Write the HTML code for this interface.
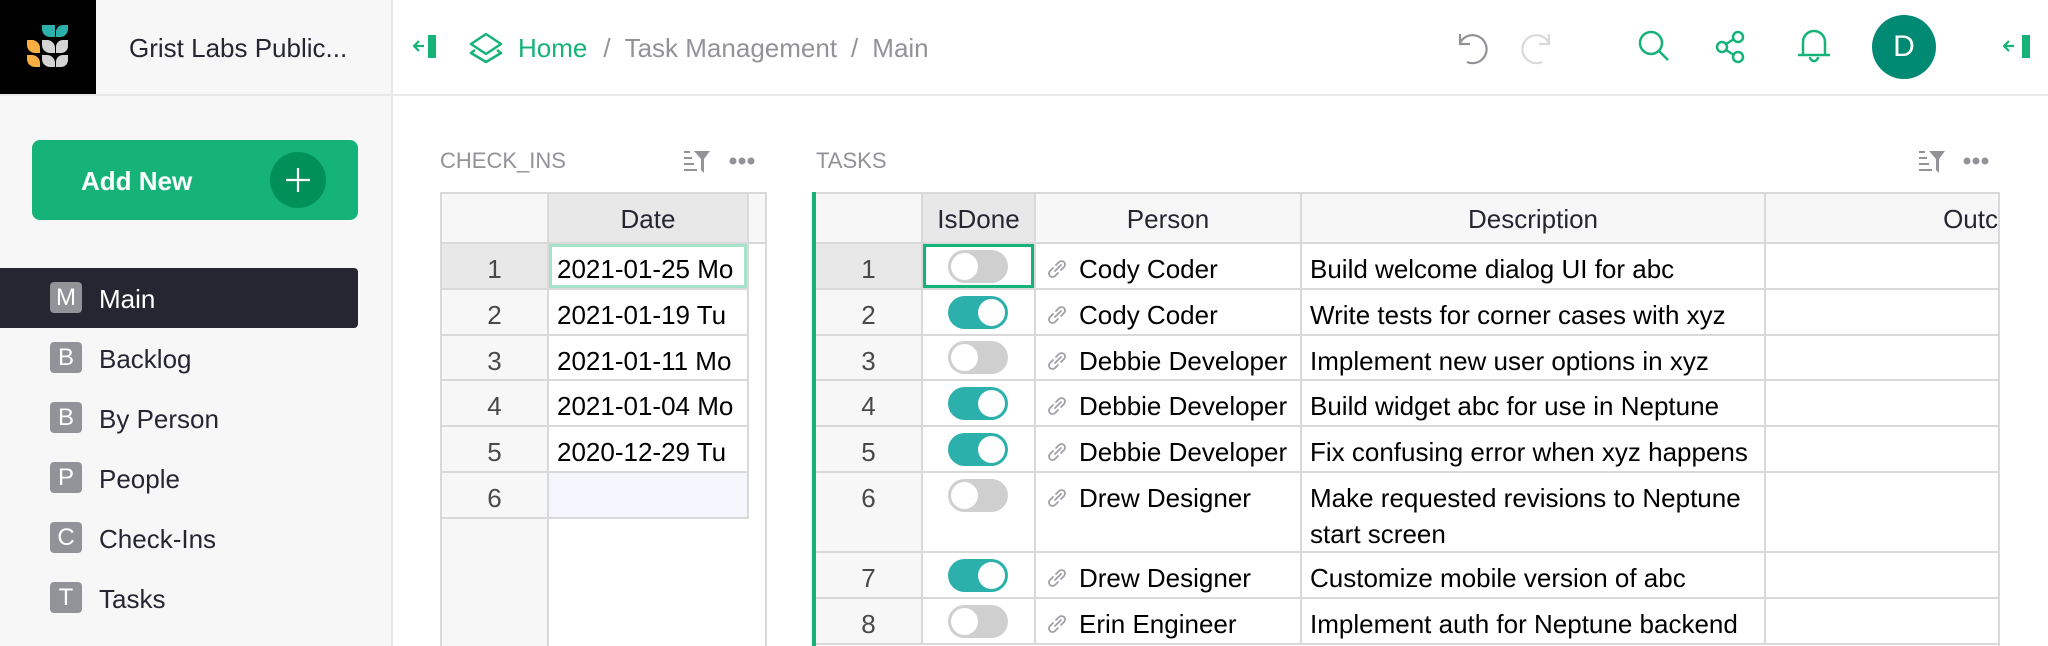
<!DOCTYPE html>
<html><head><meta charset="utf-8">
<style>
*{box-sizing:border-box;margin:0;padding:0}
body{width:2048px;height:646px;overflow:hidden;background:#fff;font-family:"Liberation Sans",Arial,sans-serif;font-size:26px;color:#262633;position:relative}
.a{position:absolute}
.cell{position:absolute;border-right:2px solid #d9d9d9;border-bottom:2px solid #d9d9d9;white-space:nowrap;overflow:hidden}
.hd{background:#f7f7f7;text-align:center;line-height:50px;color:#262633}
.rn{background:#f7f7f7;text-align:center;color:#494949;padding-top:7px;line-height:36px}
.tx{padding:7px 0 0 8px;line-height:36px;color:#000}
.nav{position:absolute;left:0;width:358px;height:60px}
.badge{position:absolute;left:50px;top:14px;width:32px;height:31px;border-radius:4px;background:#929299;color:#fff;text-align:center;line-height:31px;font-size:24px}
.nl{position:absolute;left:99px;top:1px;line-height:60px;color:#262633}
.tg{position:absolute;width:60px;height:33px;border-radius:17px}
.tg i{position:absolute;top:3px;width:27px;height:27px;border-radius:50%;background:#fff}
.off{background:#cfcfcf}.off i{left:3px}
.on{background:#2cb0ab}.on i{left:30px}
.lk{position:absolute;left:10px;top:14px}
.pn{position:absolute;left:43px;top:7px}
</style></head><body>
<div class="a" style="left:0;top:0;width:392px;height:95px;background:#f7f7f7"></div>
<div class="a" style="left:0;top:0;width:96px;height:95px;background:#000"></div>
<svg class="a" style="left:0;top:0" width="96" height="95">
<g fill="#2cb0ab"><path d="M42 25h13v12h-5a8 8 0 0 1-8-8z"/><path d="M56 37h5a8 8 0 0 0 7-8v-4h-5a7 7 0 0 0-7 7z"/></g>
<g fill="#f9ae41"><path d="M27 40h5a8 8 0 0 1 8 8v5h-5a8 8 0 0 1-8-8z"/><path d="M27 55h5a8 8 0 0 1 8 8v4h-5a8 8 0 0 1-8-8z"/></g>
<g fill="#d4d4d4"><path d="M42 40h5a8 8 0 0 1 8 8v5h-5a8 8 0 0 1-8-8z"/><path d="M56 53h5a7 7 0 0 0 7-7v-6h-5a7 7 0 0 0-7 7z"/><path d="M42 55h5a8 8 0 0 1 8 8v4h-5a8 8 0 0 1-8-8z"/><path d="M56 67h5a7 7 0 0 0 7-7v-5h-5a7 7 0 0 0-7 7z"/></g>
</svg>
<div class="a" style="left:129px;top:28px;line-height:40px;color:#262633">Grist Labs Public...</div>
<div class="a" style="left:391px;top:0;width:2px;height:646px;background:#e8e8e8"></div>
<div class="a" style="left:0;top:94px;width:2048px;height:2px;background:#e8e8e8"></div>
<svg class="a" style="left:410px;top:33px" width="30" height="28"><path d="M14 13H4M9 8l-5 5 5 5" stroke="#16b378" stroke-width="2.2" fill="none"/><rect x="18" y="2" width="8" height="23" fill="#16b378"/></svg>
<svg class="a" style="left:468px;top:32px" width="38" height="32"><g stroke="#16b378" stroke-width="2.5" fill="none" stroke-linejoin="round"><path d="M18 2L33 12 18 22 3 12z"/><path d="M7 18L3 21l15 9 15-9-4-3"/></g></svg>
<div class="a" style="left:518px;top:28px;line-height:40px;color:#929299;white-space:nowrap"><span style="color:#16b378">Home</span><span style="margin:0 14px 0 16px">/</span>Task Management<span style="margin:0 14px 0 14px">/</span>Main</div>
<svg class="a" style="left:1454px;top:30px" width="36" height="36"><path d="M6 4v10h10M6 13A14 14 0 1 1 13 32" stroke="#929299" stroke-width="2.2" fill="none"/></svg>
<svg class="a" style="left:1519px;top:30px" width="36" height="36"><path d="M30 4v10H20M30 13A14 14 0 1 0 23 32" stroke="#d9d9d9" stroke-width="2.2" fill="none"/></svg>
<svg class="a" style="left:1638px;top:30px" width="34" height="34"><circle cx="13" cy="13" r="11" stroke="#16b378" stroke-width="2.5" fill="none"/><path d="M21 21l9 9" stroke="#16b378" stroke-width="2.5"/></svg>
<svg class="a" style="left:1714px;top:30px" width="34" height="34"><g stroke="#16b378" stroke-width="2.5" fill="none"><circle cx="24" cy="7" r="5"/><circle cx="8" cy="17" r="5"/><circle cx="24" cy="27" r="5"/><path d="M12 14l8-5M12 20l8 5"/></g></svg>
<svg class="a" style="left:1796px;top:28px" width="36" height="36"><g stroke="#16b378" stroke-width="2.5" fill="none"><path d="M7 26V14a11 11 0 0 1 22 0v12M2 27h32M14 29a4 4 0 0 0 8 0"/></g></svg>
<div class="a" style="left:1872px;top:15px;width:64px;height:64px;border-radius:50%;background:#008a74;color:#fff;text-align:center;line-height:64px;font-size:30px">D</div>
<svg class="a" style="left:2000px;top:33px" width="34" height="28"><path d="M14 13H4M9 8l-5 5 5 5" stroke="#16b378" stroke-width="2.2" fill="none"/><rect x="22" y="2" width="8" height="23" fill="#16b378"/></svg>

<div class="a" style="left:0;top:96px;width:391px;height:550px;background:#f7f7f7"></div>
<div class="a" style="left:32px;top:140px;width:326px;height:80px;border-radius:8px;background:#16b378"></div>
<div class="a" style="left:81px;top:161px;line-height:40px;color:#fff;font-weight:bold">Add New</div>
<div class="a" style="left:270px;top:152px;width:56px;height:56px;border-radius:50%;background:#009058"></div>
<svg class="a" style="left:284px;top:166px" width="28" height="28"><path d="M14 2v24M2 14h24" stroke="#fff" stroke-width="2.2"/></svg>
<div class="nav" style="top:268px;background:#262633;border-radius:0 4px 4px 0"><div class="badge" style="top:14px">M</div><div class="nl" style="color:#fff">Main</div></div>
<div class="nav" style="top:328px"><div class="badge">B</div><div class="nl">Backlog</div></div>
<div class="nav" style="top:388px"><div class="badge">B</div><div class="nl">By Person</div></div>
<div class="nav" style="top:448px"><div class="badge">P</div><div class="nl">People</div></div>
<div class="nav" style="top:508px"><div class="badge">C</div><div class="nl">Check-Ins</div></div>
<div class="nav" style="top:568px"><div class="badge">T</div><div class="nl">Tasks</div></div>

<div class="a" style="left:440px;top:147px;font-size:22px;color:#929299;line-height:28px">CHECK_INS</div>
<svg class="a" style="left:682px;top:149px" width="30" height="26"><g fill="#929299"><rect x="2" y="2" width="6" height="2"/><rect x="2" y="8" width="8" height="2"/><rect x="2" y="14" width="10" height="2"/><rect x="2" y="20" width="13" height="2"/><path d="M12 2h16l-6 8v14l-3-3V10z"/></g></svg>
<svg class="a" style="left:729px;top:156px" width="28" height="10"><g fill="#929299"><circle cx="4" cy="5" r="3.5"/><circle cx="13" cy="5" r="3.5"/><circle cx="22" cy="5" r="3.5"/></g></svg>
<div class="a" style="left:440px;top:192px;width:327px;height:454px;border-left:2px solid #d9d9d9;border-right:2px solid #d9d9d9;border-top:2px solid #d9d9d9"></div>
<div class="a" style="left:442px;top:194px;width:107px;height:452px;background:#f7f7f7;border-right:2px solid #d9d9d9"></div>
<div class="cell hd" style="left:442px;top:194px;width:107px;height:50px"></div>
<div class="cell hd" style="left:549px;top:194px;width:200px;height:50px;background:#e8e8e8">Date</div>
<div class="cell hd" style="left:749px;top:194px;width:16px;height:50px;border-right:none"></div>
<div class="cell rn" style="left:442px;top:244px;width:107px;height:46px;background:#e8e8e8">1</div>
<div class="cell tx" style="left:549px;top:244px;width:200px;height:46px;box-shadow:inset 0 0 0 3px #a7e3cb">2021-01-25 Mo</div>
<div class="cell rn" style="left:442px;top:290px;width:107px;height:46px">2</div>
<div class="cell tx" style="left:549px;top:290px;width:200px;height:46px">2021-01-19 Tu</div>
<div class="cell rn" style="left:442px;top:336px;width:107px;height:45px">3</div>
<div class="cell tx" style="left:549px;top:336px;width:200px;height:45px">2021-01-11 Mo</div>
<div class="cell rn" style="left:442px;top:381px;width:107px;height:46px">4</div>
<div class="cell tx" style="left:549px;top:381px;width:200px;height:46px">2021-01-04 Mo</div>
<div class="cell rn" style="left:442px;top:427px;width:107px;height:46px">5</div>
<div class="cell tx" style="left:549px;top:427px;width:200px;height:46px">2020-12-29 Tu</div>
<div class="cell rn" style="left:442px;top:473px;width:107px;height:46px">6</div>
<div class="cell tx" style="left:549px;top:473px;width:200px;height:46px;background:#f4f5fd"></div>

<div class="a" style="left:816px;top:147px;font-size:22px;color:#929299;line-height:28px">TASKS</div>
<svg class="a" style="left:1917px;top:149px" width="30" height="26"><g fill="#929299"><rect x="2" y="2" width="6" height="2"/><rect x="2" y="8" width="8" height="2"/><rect x="2" y="14" width="10" height="2"/><rect x="2" y="20" width="13" height="2"/><path d="M12 2h16l-6 8v14l-3-3V10z"/></g></svg>
<svg class="a" style="left:1963px;top:156px" width="28" height="10"><g fill="#929299"><circle cx="4" cy="5" r="3.5"/><circle cx="13" cy="5" r="3.5"/><circle cx="22" cy="5" r="3.5"/></g></svg>
<div class="a" style="left:812px;top:192px;width:4px;height:454px;background:#16b378"></div>
<div class="a" style="left:816px;top:192px;width:1184px;height:2px;background:#d9d9d9"></div>
<div class="a" style="left:1998px;top:192px;width:2px;height:454px;background:#d9d9d9"></div>
<div class="cell hd" style="left:816px;top:194px;width:107px;height:50px"></div>
<div class="cell hd" style="left:923px;top:194px;width:113px;height:50px;background:#e8e8e8">IsDone</div>
<div class="cell hd" style="left:1036px;top:194px;width:266px;height:50px">Person</div>
<div class="cell hd" style="left:1302px;top:194px;width:464px;height:50px">Description</div>
<div class="cell hd" style="left:1766px;top:194px;width:232px;height:50px;border-right:none;text-align:right">Outc</div>

<svg width="0" height="0" style="position:absolute"><defs><g id="lk"><path d="M9 13l6-6M7 10l-3 3a3.5 3.5 0 0 0 5 5l3-3M10 7l3-3a3.5 3.5 0 0 1 5 5l-3 3" stroke="#a0a0a6" stroke-width="1.8" fill="none" stroke-linecap="round"/></g></defs></svg>

<div class="cell rn" style="left:816px;top:244px;width:107px;height:46px;background:#e8e8e8">1</div>
<div class="cell" style="left:923px;top:244px;width:113px;height:46px;box-shadow:inset 0 0 0 3px #16b378"><div class="tg off" style="left:25px;top:6px"><i></i></div></div>
<div class="cell tx" style="left:1036px;top:244px;width:266px;height:46px"><svg class="lk" width="22" height="22"><use href="#lk"/></svg><span class="pn">Cody Coder</span></div>
<div class="cell tx" style="left:1302px;top:244px;width:464px;height:46px">Build welcome dialog UI for abc</div>
<div class="cell" style="left:1766px;top:244px;width:232px;height:46px;border-right:none"></div>

<div class="cell rn" style="left:816px;top:290px;width:107px;height:46px">2</div>
<div class="cell" style="left:923px;top:290px;width:113px;height:46px"><div class="tg on" style="left:25px;top:6px"><i></i></div></div>
<div class="cell tx" style="left:1036px;top:290px;width:266px;height:46px"><svg class="lk" width="22" height="22"><use href="#lk"/></svg><span class="pn">Cody Coder</span></div>
<div class="cell tx" style="left:1302px;top:290px;width:464px;height:46px">Write tests for corner cases with xyz</div>
<div class="cell" style="left:1766px;top:290px;width:232px;height:46px;border-right:none"></div>

<div class="cell rn" style="left:816px;top:336px;width:107px;height:45px">3</div>
<div class="cell" style="left:923px;top:336px;width:113px;height:45px"><div class="tg off" style="left:25px;top:5px"><i></i></div></div>
<div class="cell tx" style="left:1036px;top:336px;width:266px;height:45px"><svg class="lk" width="22" height="22"><use href="#lk"/></svg><span class="pn">Debbie Developer</span></div>
<div class="cell tx" style="left:1302px;top:336px;width:464px;height:45px">Implement new user options in xyz</div>
<div class="cell" style="left:1766px;top:336px;width:232px;height:45px;border-right:none"></div>

<div class="cell rn" style="left:816px;top:381px;width:107px;height:46px">4</div>
<div class="cell" style="left:923px;top:381px;width:113px;height:46px"><div class="tg on" style="left:25px;top:6px"><i></i></div></div>
<div class="cell tx" style="left:1036px;top:381px;width:266px;height:46px"><svg class="lk" width="22" height="22"><use href="#lk"/></svg><span class="pn">Debbie Developer</span></div>
<div class="cell tx" style="left:1302px;top:381px;width:464px;height:46px">Build widget abc for use in Neptune</div>
<div class="cell" style="left:1766px;top:381px;width:232px;height:46px;border-right:none"></div>

<div class="cell rn" style="left:816px;top:427px;width:107px;height:46px">5</div>
<div class="cell" style="left:923px;top:427px;width:113px;height:46px"><div class="tg on" style="left:25px;top:6px"><i></i></div></div>
<div class="cell tx" style="left:1036px;top:427px;width:266px;height:46px"><svg class="lk" width="22" height="22"><use href="#lk"/></svg><span class="pn">Debbie Developer</span></div>
<div class="cell tx" style="left:1302px;top:427px;width:464px;height:46px">Fix confusing error when xyz happens</div>
<div class="cell" style="left:1766px;top:427px;width:232px;height:46px;border-right:none"></div>

<div class="cell rn" style="left:816px;top:473px;width:107px;height:80px">6</div>
<div class="cell" style="left:923px;top:473px;width:113px;height:80px"><div class="tg off" style="left:25px;top:6px"><i></i></div></div>
<div class="cell tx" style="left:1036px;top:473px;width:266px;height:80px"><svg class="lk" width="22" height="22"><use href="#lk"/></svg><span class="pn">Drew Designer</span></div>
<div class="cell tx" style="left:1302px;top:473px;width:464px;height:80px;white-space:normal">Make requested revisions to Neptune<br>start screen</div>
<div class="cell" style="left:1766px;top:473px;width:232px;height:80px;border-right:none"></div>

<div class="cell rn" style="left:816px;top:553px;width:107px;height:46px">7</div>
<div class="cell" style="left:923px;top:553px;width:113px;height:46px"><div class="tg on" style="left:25px;top:6px"><i></i></div></div>
<div class="cell tx" style="left:1036px;top:553px;width:266px;height:46px"><svg class="lk" width="22" height="22"><use href="#lk"/></svg><span class="pn">Drew Designer</span></div>
<div class="cell tx" style="left:1302px;top:553px;width:464px;height:46px">Customize mobile version of abc</div>
<div class="cell" style="left:1766px;top:553px;width:232px;height:46px;border-right:none"></div>

<div class="cell rn" style="left:816px;top:599px;width:107px;height:46px">8</div>
<div class="cell" style="left:923px;top:599px;width:113px;height:46px"><div class="tg off" style="left:25px;top:6px"><i></i></div></div>
<div class="cell tx" style="left:1036px;top:599px;width:266px;height:46px"><svg class="lk" width="22" height="22"><use href="#lk"/></svg><span class="pn">Erin Engineer</span></div>
<div class="cell tx" style="left:1302px;top:599px;width:464px;height:46px">Implement auth for Neptune backend</div>
<div class="cell" style="left:1766px;top:599px;width:232px;height:46px;border-right:none"></div>
</body></html>
